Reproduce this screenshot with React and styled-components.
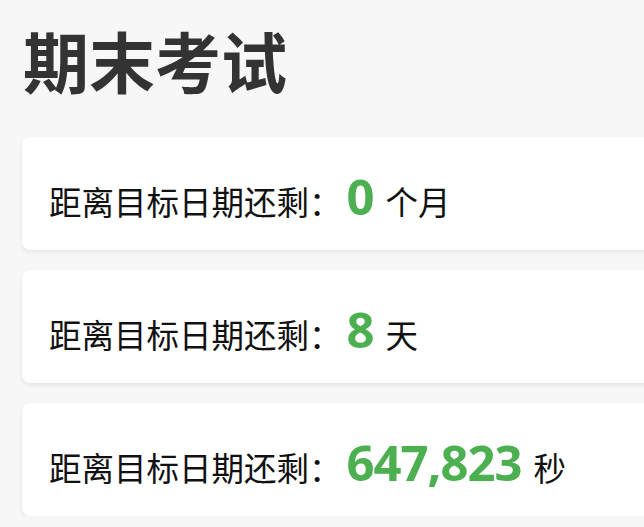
import styled, { createGlobalStyle } from "styled-components";

const GlobalStyle = createGlobalStyle`
  html, body {
    margin: 0;
    padding: 0;
    overflow: hidden;
    background: #f7f7f7;
    font-family: "Noto Sans CJK SC", "Noto Sans", sans-serif;
  }
`;

const Page = styled.div`
  padding: 20px 0 0 22px;
  width: 900px;
`;

const Title = styled.h1`
  margin: 0 0 0 1px;
  font-size: 66px;
  line-height: 1.2;
  font-weight: 700;
  color: #333;
  height: 117px;
`;

const List = styled.div`
  display: flex;
  flex-direction: column;
  gap: 20px;
`;

const Card = styled.div`
  box-sizing: border-box;
  height: 113px;
  padding: 4px 27px 0;
  background: #fff;
  border-radius: 8px;
  box-shadow: 0 2px 4px rgba(0, 0, 0, 0.08);
  display: flex;
  align-items: center;
`;

const Line = styled.p`
  margin: 0;
  display: flex;
  align-items: baseline;
  font-size: 32.5px;
  color: #111;
`;

const Num = styled.span`
  font-family: "Open Sans", "Noto Sans", sans-serif;
  font-weight: 700;
  font-size: 49px;
  letter-spacing: -1px;
  color: #4caf50;
  margin: 0 12px 0 5px;
`;

const rows = [
  { value: "0", unit: "个月" },
  { value: "8", unit: "天" },
  { value: "647,823", unit: "秒" },
];

export default function App() {
  return (
    <Page>
      <GlobalStyle />
      <Title>期末考试</Title>
      <List>
        {rows.map((r) => (
          <Card key={r.unit}>
            <Line>
              距离目标日期还剩：<Num>{r.value}</Num>
              {r.unit}
            </Line>
          </Card>
        ))}
      </List>
    </Page>
  );
}
